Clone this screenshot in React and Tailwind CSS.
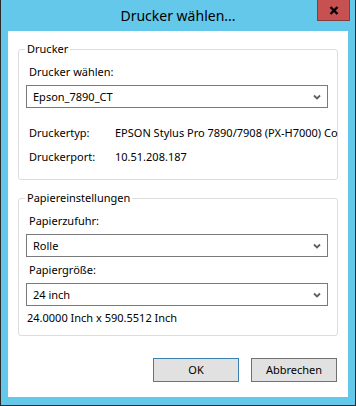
import React from 'react';

const font = { fontFamily: '"Noto Sans", "Open Sans", sans-serif' };

const Chevron = () => (
  <svg width="8" height="6" viewBox="0 0 8 6" className="shrink-0">
    <path d="M1 1.5 L4 4.5 L7 1.5" fill="none" stroke="#5f5f5f" strokeWidth="1.8" />
  </svg>
);

const Combo = ({ value }) => (
  <div className="flex h-[23px] items-center justify-between border border-[#7a7a7a] bg-white pl-[6px] pr-[6px]">
    <span className="text-[11px] leading-[16px] text-black">{value}</span>
    <Chevron />
  </div>
);

const Group = ({ title, children, className = '' }) => (
  <fieldset className={`mx-[10px] min-w-0 rounded-[3px] border border-[#dcdcdc] px-[7px] ${className}`}>
    <legend className="-ml-[1px] px-[2px] text-[11px] leading-[16px] text-black">{title}</legend>
    {children}
  </fieldset>
);

const InfoRow = ({ label, value, className = '' }) => (
  <div className={`flex text-[11px] leading-[16px] text-black ${className}`}>
    <span className="w-[89px] shrink-0 pl-[3px]">{label}</span>
    <span className="whitespace-nowrap">{value}</span>
  </div>
);

const Button = ({ children, primary }) => (
  <button
    className={`h-[24px] w-[86px] border bg-[#e1e1e1] text-[11px] leading-[16px] text-black ${
      primary ? 'border-[#3c7fb1]' : 'border-[#707070]'
    }`}
  >
    {children}
  </button>
);

export default function App() {
  return (
    <div style={font} className="flex h-[406px] w-[356px] flex-col border-x border-b border-[#2b2b2b] bg-[#64c8ea]">
      <div className="relative flex h-[31px] shrink-0 items-center justify-center">
        <span className="pb-[1px] text-[14px] text-black">Drucker wählen...</span>
        <div className="absolute right-[5px] top-0 flex h-[21px] w-[33px] items-center justify-center border border-t-0 border-[#8a3a3a] bg-[#c75050]">
          <svg width="10" height="9" viewBox="0 0 10 9">
            <path d="M1.5 1 L8.5 8 M8.5 1 L1.5 8" stroke="#000" strokeWidth="2.4" />
          </svg>
        </div>
      </div>
      <div className="mx-[7px] mb-[8px] flex-1 overflow-hidden bg-white">
        <Group title="Drucker" className="mt-[10px] pb-[14px]">
          <div className="pl-[3px] pt-[7px] text-[11px] leading-[16px]">Drucker wählen:</div>
          <div className="mr-[2px] mt-[5px]">
            <Combo value="Epson_7890_CT" />
          </div>
          <InfoRow className="mt-[17px]" label="Druckertyp:" value="EPSON Stylus Pro 7890/7908 (PX-H7000) Co" />
          <InfoRow className="mt-[8px]" label="Druckerport:" value="10.51.208.187" />
        </Group>
        <Group title="Papiereinstellungen" className="mt-[10px] pb-[9px]">
          <div className="pl-[3px] pt-[7px] text-[11px] leading-[16px]">Papierzufuhr:</div>
          <div className="mr-[2px] mt-[5px]">
            <Combo value="Rolle" />
          </div>
          <div className="mt-[5px] pl-[3px] text-[11px] leading-[16px]">Papiergröße:</div>
          <div className="mr-[2px] mt-[5px]">
            <Combo value="24 inch" />
          </div>
          <div className="mt-[4px] pl-[1px] text-[11px] leading-[16px]">24.0000 Inch x 590.5512 Inch</div>
        </Group>
        <div className="mr-[11px] mt-[22px] flex justify-end gap-[12px]">
          <Button primary>OK</Button>
          <Button>Abbrechen</Button>
        </div>
      </div>
    </div>
  );
}
